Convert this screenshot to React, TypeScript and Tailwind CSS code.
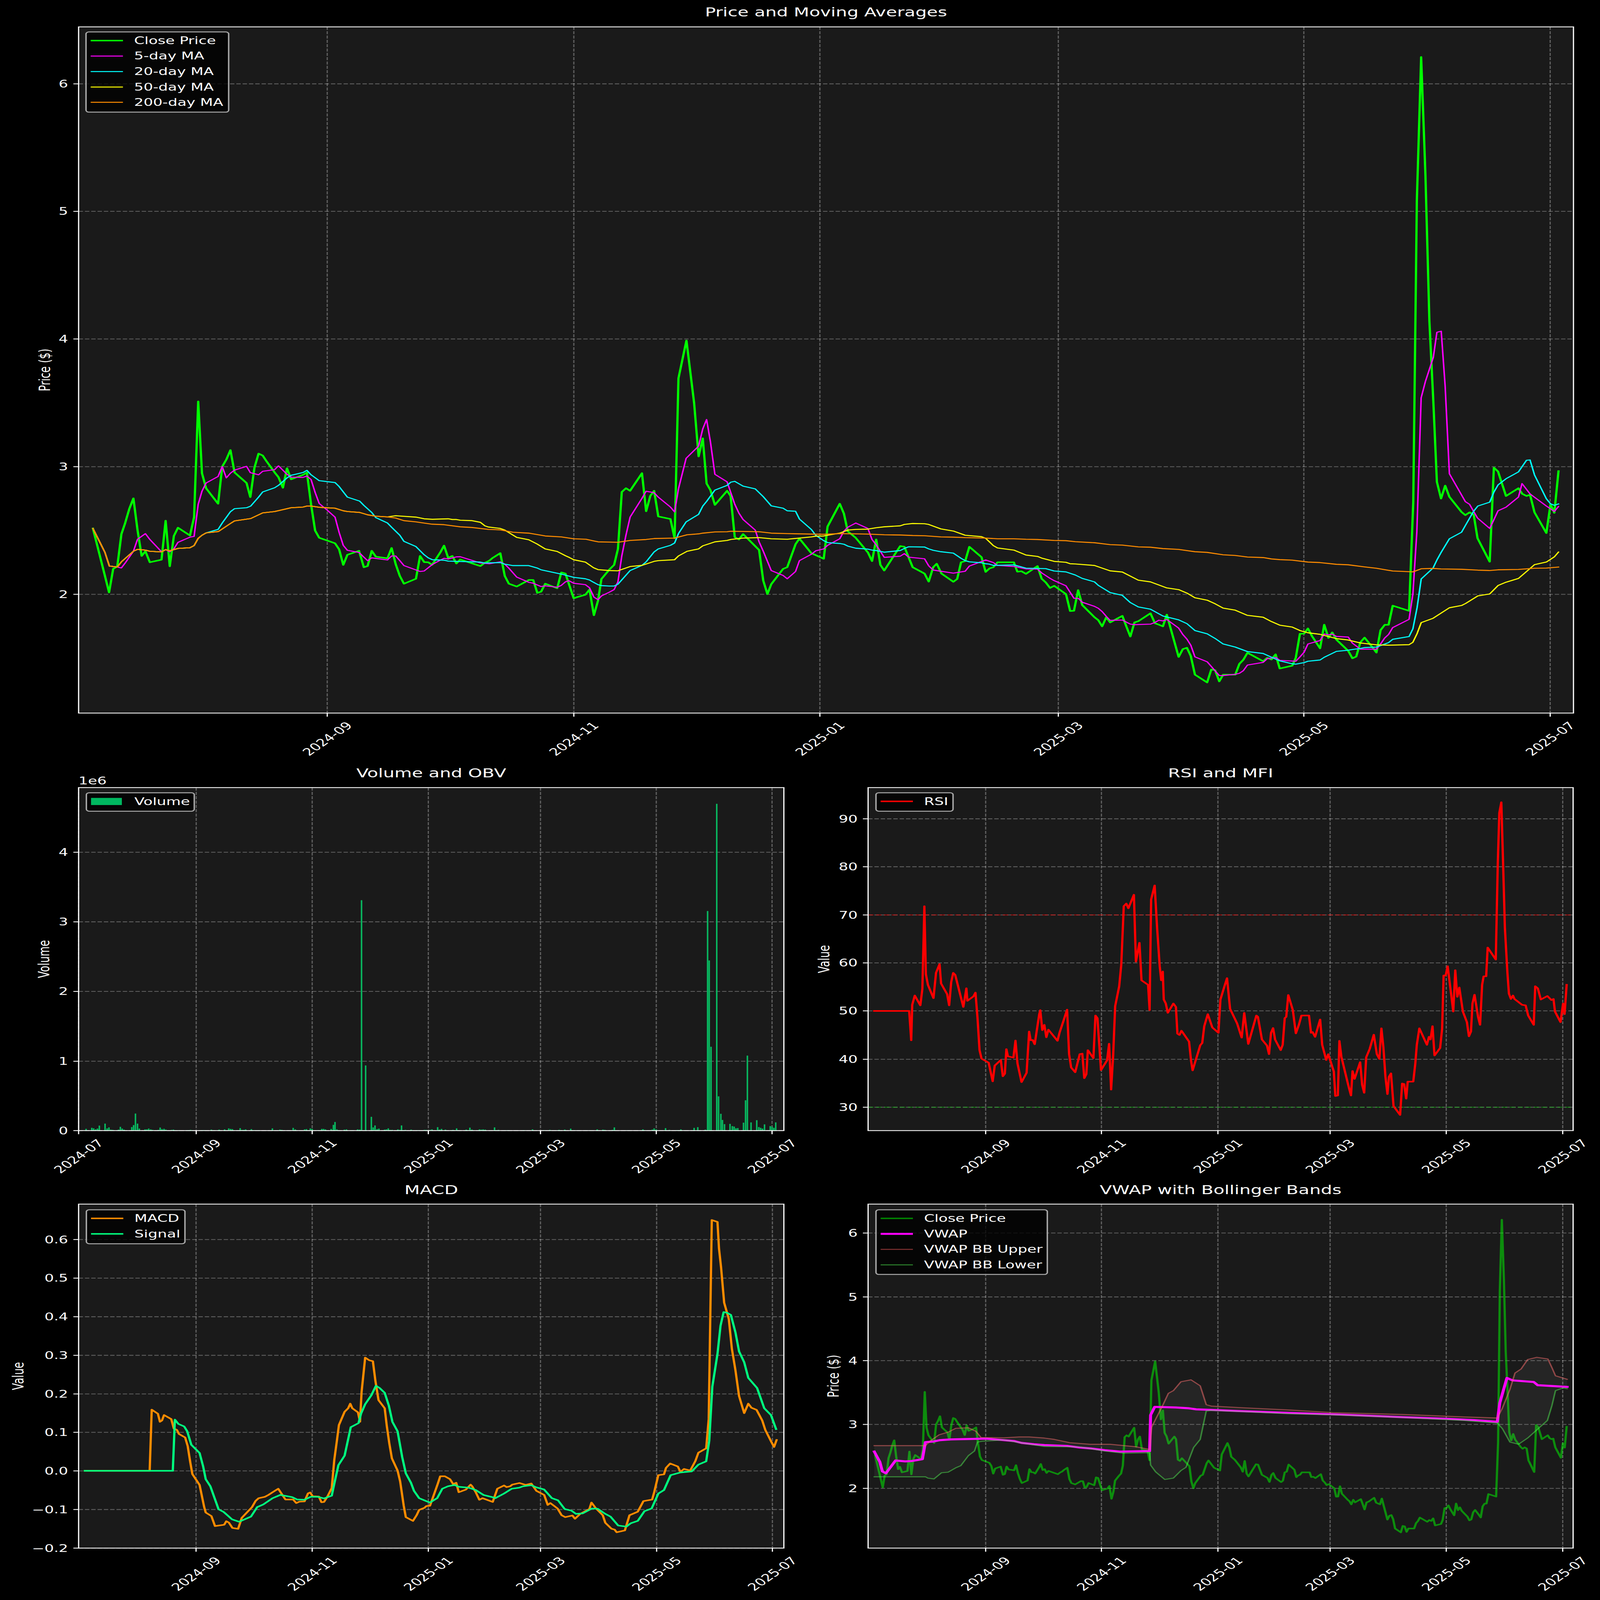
import React from "react";

type P = [number, number];

const seg = (ox: number, oy: number, sx: number, sy: number, a: number[]): P[] => {
  const out: P[] = [];
  for (let i = 0; i < a.length; i += 2) out.push([ox + a[i] / sx, oy + a[i + 1] / sy]);
  return out;
};
const z2 = (a: number[]) => seg(200, 1400, 1.0453, 1.0453, a);
const z3 = (a: number[]) => seg(1700, 1400, 1.12, 1.0453, a);
const z9 = (a: number[]) => seg(3000, 1700, 1.12, 1.4255, a);
const z6 = (a: number[]) => seg(2250, 3100, 0.7082, 0.9224, a);
const z7 = (a: number[]) => seg(0, 4780, 0.6969, 0.9079, a);
const z8 = (a: number[]) => seg(2250, 4780, 0.7082, 0.9079, a);
const pts = (a: P[]) => a.map((p) => `${p[0].toFixed(1)},${p[1].toFixed(1)}`).join(" ");

const close: P[] = [
  ...z2([62,783,97,985,109,1055,121,955,133,945,145,807,156,760,168,700,180,655,192,790,204,900,215,880,228,927,262,916,274,750,286,944,298,815,310,780,345,813,357,735,369,243,380,548,392,612,404,635,427,678,439,520,451,490,463,450,475,545,510,590,521,650,533,525,545,465,557,473,568,497,592,545,603,565,616,610,628,527,640,574,675,555,686,545,698,680,710,792,722,823,768,846,780,872,792,938,804,895,838,878,852,948,863,943,875,878,887,903,921,910,933,866,945,935,957,985,969,1018,1004,997,1016,900,1028,926,1040,927,1051,938,1075,885,1086,856,1098,908,1110,900,1122,932,1133,915,1192,943,1205,929,1218,920,1228,908,1250,888,1263,985,1275,1018,1298,1030,1322,1011,1333,1002,1346,1002,1358,1057,1369,1052,1381,1018,1416,1037,1428,970,1440,975,1464,1080,1474,1075,1498,1065,1510,1043,1523,1152,1535,1090,1545,998]),
  ...z3([0,958,15,938,27,870,39,628,52,612,65,623,102,548,115,710,128,645,140,623,153,732,191,743,204,825,216,145,241,-16,265,250,279,477,292,400,304,592,316,620,330,683,368,623,379,645,392,820,405,830,418,807,468,875,481,1005,494,1062,506,1020,543,955,556,948,582,850,594,826,631,888,670,912,682,775,720,678,733,720,745,795,770,823,808,885,821,922,834,830,847,938,859,962,884,910,909,858,922,861,935,905,948,948,985,975,998,1009,1012,948,1023,933,1038,975,1075,1010,1087,998,1099,927,1112,922,1125,861,1163,905,1176,968,1188,953,1200,948,1213,927,1264,927,1275,967,1288,965,1302,976,1338,943,1351,997,1364,1013,1377,1036,1390,1027,1427,1062,1440,1134,1452,1133]),
  ...z9([9,998,22,1085,60,1155,72,1172,84,1208,97,1155,109,1185,147,1147,160,1210,172,1267,185,1185,197,1178,235,1132,249,1190,261,1198,274,1208,286,1140,298,1220,323,1385,336,1340,349,1332,361,1380,374,1488,412,1533,425,1458,437,1462,450,1527,462,1488,500,1488,513,1425,525,1402,538,1361,587,1410,600,1390,613,1400,626,1370,639,1452,678,1436,689,1390,702,1251,715,1250,727,1220,740,1265,765,1335,778,1198,791,1275,803,1243,816,1285,853,1350,866,1393,878,1383,891,1300,904,1273,929,1330,941,1360,954,1230,967,1199,979,1199,992,1088,1043,1118]),
  [3943,2041],[3953,816],[3965,232],[3977,714],[3988,1306],[3999,1633],
  ...z9([1130,370,1143,467,1156,392,1169,457,1207,545,1219,563,1232,547,1245,560,1257,697,1295,833,1308,288,1321,310,1346,452,1385,407,1397,440,1410,452,1421,445,1435,547,1472,667,1485,500,1497,550,1510,308]),
];

const ma5: P[] = [
  ...z2([62,783,97,885,110,943,133,947,145,951,157,928,180,880,192,829,215,805,228,830,262,882,274,873,286,882,298,870,310,842,345,820,357,817,369,680,380,625,392,590,427,562,439,520,451,568,463,548,475,535,510,519,521,546,545,555,557,540,592,533,603,517,628,553,640,565,675,566,686,560,698,575,710,630,722,677,745,705,768,735,780,800,792,855,804,876,838,885,852,905,863,920,875,908,921,917,933,900,945,900,957,920,969,941,1016,966,1028,964,1040,950,1051,937,1075,918,1086,910,1098,913,1122,904,1133,903,1192,930,1218,933,1250,925,1263,935,1275,952,1298,990,1333,1012,1346,1016,1369,1030,1381,1027,1416,1033,1428,1025,1440,1010,1450,1005,1464,1016,1498,1022,1510,1035,1523,1075,1535,1086,1545,1070]),
  ...z3([0,1054,15,1043,27,1010,39,900,52,812,65,735,102,655,115,625,140,631,153,650,191,692,204,713,216,615,240,485,279,433,292,360,304,320,316,415,330,553,368,585,392,680,405,718,418,745,456,790,468,840,481,880,506,962,543,983,556,997,582,966,594,920,631,893,645,878,670,870,682,855,720,827,733,795,745,778,770,760,808,783,821,830,834,853,859,906,909,901,922,890,935,905,985,912,998,942,1012,960,1075,973,1112,965,1125,943,1176,917,1200,928,1213,940,1265,945,1302,955,1338,956,1351,972,1377,995,1390,1005,1427,1027,1452,1080]),
  ...z9([10,1046,22,1068,60,1092,72,1103,84,1122,97,1150,109,1173,147,1171,172,1195,185,1198,235,1195,249,1185,261,1172,274,1176,286,1168,323,1218,336,1255,349,1282,361,1317,374,1385,412,1413,450,1493,462,1493,500,1486,513,1480,525,1465,538,1432,587,1417,600,1395,626,1388,639,1405,689,1410,702,1385,715,1358,727,1310,765,1290,778,1252,791,1257,803,1253,816,1266,853,1270,866,1305,891,1340,941,1340,954,1310,967,1275,979,1255,992,1215,1043,1167,1055,1020]),
  [3953,2163],[3965,1618],[3977,1551],[3999,1453],[4009,1351],[4021,1347],[4032,1571],
  ...z9([1169,323,1219,485,1232,500,1257,580,1295,640,1308,590,1321,538,1346,517,1385,458,1396,380,1421,440,1472,510,1497,542,1510,513]),
];

const ma20: P[] = [
  ...z2([62,783,97,885,110,943,133,947,145,925,180,880,192,872,215,875,228,880,262,883,274,873,286,878,310,868,345,865,357,856,369,825,380,812,392,802,427,787,439,760,463,712,475,699,510,695,522,688,545,650,557,628,592,610,603,600,628,568,640,557,675,545,686,536,698,555,722,580,768,588,780,605,804,650,840,667,852,685,875,715,887,737,921,760,933,778,957,812,969,838,1004,860,1028,895,1040,908,1052,916,1086,918,1098,922,1192,926,1204,930,1250,928,1263,935,1287,941,1333,941,1357,951,1369,959,1428,977,1464,991,1498,997,1510,1002,1522,1012,1535,1022,1545,1026]),
  ...z3([0,1028,15,1028,27,1020,65,962,102,940,115,925,140,883,153,870,191,855,204,845,216,805,240,755,279,723,292,688,304,668,330,620,368,600,380,586,392,583,418,603,456,615,481,648,506,687,543,697,556,708,582,710,594,743,631,787,645,812,670,835,682,843,720,847,733,850,745,858,770,867,808,871,821,875,834,877,859,884,909,877,922,868,935,861,985,862,998,870,1012,876,1036,882,1075,888,1099,910,1112,920,1125,925,1163,929,1176,933,1188,935,1200,940,1265,938,1302,952,1364,954,1390,964,1427,968]),
  ...z9([0,910,22,930,60,950,72,970,109,1012,147,1028,172,1070,197,1095,235,1108,274,1148,323,1170,349,1192,374,1232,412,1251,437,1278,462,1310,500,1328,538,1354,587,1365,639,1408,678,1425,689,1427,715,1418,727,1410,765,1403,778,1387,816,1353,853,1346,866,1342,891,1336,904,1331,941,1328,979,1302,992,1283,1043,1267,1055,1222,1068,1100,1081,933,1118,870,1131,820,1143,780,1169,700,1207,662,1220,620,1245,540,1258,510,1295,488,1308,430,1321,388,1346,352,1385,312,1410,245,1421,243,1435,330,1472,468,1485,497,1497,506,1510,498]),
];

const ma50: P[] = [
  ...z2([62,783,97,885,110,943,133,947,145,925,180,880,192,872,215,875,228,880,262,883,274,873,286,878,310,868,345,865,357,856,369,825,380,812,392,802,428,796,463,762,475,751,522,741,557,717,592,711,628,699,640,695,675,692,686,688,698,688,722,693,768,697,792,708,804,711,840,715,863,725,887,731,921,734,945,729,1004,735,1028,742,1052,744,1098,742,1110,745,1122,745,1133,748,1168,750,1192,757,1205,772,1215,777,1250,783,1263,790,1298,821,1333,831,1357,849,1381,870,1416,881,1440,899,1452,907,1464,916,1498,926,1522,950,1535,958]),
  ...z3([0,962,27,963,65,945,102,940,140,923,153,920,204,916,216,900,243,880,279,870,292,857,330,840,368,834,380,830,418,824,468,822,506,827,556,829,594,824,631,819,645,816,670,815,720,803,745,790,770,787,808,786,834,780,859,776,909,772,922,766,948,762,985,763,998,766,1036,785,1075,794,1112,812,1163,818,1176,825,1200,856,1213,866,1264,875,1302,896,1338,902,1351,909,1390,923,1427,927,1440,933]),
  ...z9([0,846,60,855,109,886,147,893,197,940,235,950,286,985,323,995,349,1015,374,1042,412,1056,437,1077,462,1102,500,1114,538,1144,587,1155,613,1180,639,1201,678,1212,702,1232,727,1245,765,1254,816,1279,853,1287,891,1304,941,1315,979,1317,1043,1314,1055,1300,1068,1250,1081,1186,1118,1161,1169,1100,1207,1087,1220,1075,1258,1031,1295,1020,1321,971,1346,952,1385,930,1435,850,1472,835,1497,805,1510,777]),
];

const ma200: P[] = [
  ...z2([62,783,97,885,110,943,133,947,145,925,180,880,192,872,215,875,228,880,262,883,274,873,286,878,310,868,345,865,357,856,369,825,380,812,392,802,428,796,463,762,475,751,522,741,557,717,592,711,628,699,640,695,675,692,686,688,698,688,722,693,768,697,792,708,804,711,840,715,863,725,887,731,921,734,945,739,969,750,1004,755,1051,765,1086,767,1133,776,1168,779,1215,787,1250,789,1287,799,1333,803,1381,815,1428,819,1464,827,1500,829,1535,840]),
  ...z3([0,841,27,842,65,834,115,830,140,826,204,824,243,810,279,806,292,803,330,798,368,797,380,795,468,797,506,803,556,805,670,808,720,805,808,807,859,810,909,811,948,813,985,814,1036,819,1075,820,1112,822,1176,824,1213,827,1264,827,1302,829,1338,830,1390,834,1427,835]),
  ...z9([0,717,60,723,109,734,147,737,197,747,235,749,274,757,323,762,374,775,412,779,462,793,500,797,538,806,587,809,613,817,639,821,678,824,727,835,765,838,816,848,853,851,904,863,941,871,992,887,1043,891,1055,892,1081,874,1118,872,1143,875,1207,877,1258,882,1295,884,1321,880,1385,878,1435,871,1472,870,1510,864]),
];

const rsi = z6([134,933,203,933,207,1043,209,910,214,875,225,912,229,850,233,540,236,795,240,835,251,885,256,790,263,757,266,830,278,870,282,912,286,825,290,790,294,798,310,918,316,848,318,895,330,878,334,864,338,960,342,1080,346,1112,360,1127,368,1197,372,1138,384,1117,388,1178,392,1168,395,1076,398,1103,409,1108,413,1044,417,1130,425,1200,435,1165,440,1010,443,1043,447,1042,451,1058,460,945,462,930,466,1005,470,985,474,1032,478,1003,496,1045,500,1015,507,975,515,928,519,1095,523,1145,531,1163,540,1095,545,1093,549,1185,553,1170,556,1080,567,1110,571,950,575,960,582,1155,594,1118,598,1056,602,1228,606,1100,610,915,618,840,622,760,627,540,632,530,636,548,647,497,651,748,658,677,662,818,675,835,678,930,681,515,688,462,693,625,698,765,701,818,704,785,706,890,710,905,714,940,725,905,730,918,733,1018,737,1023,741,1007,756,1048,760,1120,763,1156,778,1062,782,1053,786,990,793,945,802,995,805,1000,814,1015,818,890,826,840,831,810,837,925,851,980,860,1033,865,940,873,1057,880,1010,889,950,892,955,900,1040,910,1063,914,1095,918,1015,922,997,926,1040,937,1080,941,1060,945,960,948,955,952,873,961,930,967,1017,973,985,978,950,993,950,997,1015,1000,1012,1005,1030,1015,965,1019,1060,1027,1117,1031,1095,1042,1160,1045,1252,1050,1250,1053,1045,1057,1105,1071,1215,1076,1250,1079,1158,1083,1188,1094,1125,1098,1210,1102,1240,1106,1107,1113,1075,1121,1022,1127,1095,1132,1113,1136,998,1140,1070,1144,1180,1148,1245,1151,1180,1155,1167,1160,1290,1173,1323,1177,1205,1181,1207,1185,1262,1188,1198,1199,1198,1203,1130,1206,1060,1211,998,1226,1060,1230,1030,1233,1040,1237,990,1241,1100,1252,1072,1256,1000,1259,800,1263,800,1267,765,1278,935,1282,780,1286,880,1290,845,1297,935,1305,975,1309,1028,1313,1010,1316,905,1320,872,1327,955,1331,985,1335,835,1338,803,1343,803,1346,695,1362,740,1366,380,1369,190,1373,150,1376,350,1380,620,1385,790,1388,868,1392,888,1396,875,1399,888,1414,910,1421,912,1426,950,1437,985,1440,840,1445,848,1451,890,1464,877,1472,892,1476,888,1479,935,1490,975,1495,905,1498,945,1502,835]);

const macd = z7([165,1091,291,1091,295,865,307,880,311,910,315,905,319,885,333,900,338,935,344,940,348,955,360,968,365,1000,370,1060,374,1103,388,1143,397,1225,400,1245,411,1258,418,1295,436,1290,440,1277,445,1282,452,1302,463,1305,470,1265,490,1225,497,1202,503,1192,515,1187,522,1180,530,1170,541,1157,555,1197,570,1197,576,1210,582,1205,592,1204,599,1174,603,1171,608,1185,620,1186,625,1207,630,1206,637,1185,645,1155,650,1050,655,980,659,922,670,873,677,860,681,843,685,860,696,875,700,910,703,800,710,673,718,683,725,686,730,760,736,830,748,860,752,925,757,990,762,1045,773,1090,778,1130,785,1220,789,1262,803,1276,810,1255,815,1235,825,1228,829,1221,836,1220,851,1140,856,1111,865,1111,875,1122,881,1140,887,1135,892,1170,906,1160,915,1142,918,1148,925,1170,932,1198,938,1192,958,1206,967,1157,980,1145,985,1151,992,1148,996,1142,1010,1136,1022,1143,1033,1138,1043,1165,1058,1180,1065,1217,1070,1210,1084,1230,1092,1255,1099,1262,1113,1256,1118,1268,1128,1250,1140,1238,1146,1232,1150,1208,1158,1228,1172,1255,1177,1283,1189,1305,1195,1308,1199,1318,1215,1311,1224,1255,1240,1242,1251,1203,1268,1197,1272,1170,1280,1107,1291,1104,1295,1080,1303,1064,1318,1075,1323,1095,1330,1084,1342,1090,1352,1055,1358,1024,1373,1008,1378,900,1384,165,1395,172,1398,270,1402,340,1408,470,1417,530,1423,640,1430,720,1437,815,1447,878,1455,843,1461,858,1471,866,1482,905,1488,940,1500,985,1505,1003,1510,977]);

const signal = z7([165,1091,336,1091,340,902,347,918,358,927,364,945,372,995,388,1025,395,1075,400,1122,409,1148,425,1233,435,1243,451,1270,465,1279,488,1260,500,1225,512,1215,530,1192,545,1180,568,1188,578,1197,592,1198,604,1187,618,1187,630,1193,645,1183,651,1130,658,1070,670,1035,682,930,697,915,702,880,710,845,722,812,731,777,738,785,748,803,756,850,763,910,773,945,782,1040,789,1100,799,1135,805,1165,815,1192,829,1203,836,1208,850,1192,860,1157,871,1148,884,1143,892,1150,911,1153,925,1162,940,1180,957,1188,963,1192,980,1175,995,1157,1010,1153,1017,1148,1033,1144,1043,1152,1058,1160,1073,1192,1085,1200,1098,1232,1111,1238,1120,1250,1133,1248,1151,1230,1162,1231,1177,1250,1187,1260,1202,1293,1218,1297,1226,1285,1240,1276,1253,1240,1267,1230,1280,1175,1291,1162,1304,1107,1323,1097,1345,1093,1358,1068,1373,1056,1379,980,1385,780,1395,660,1401,555,1407,505,1413,507,1421,515,1430,580,1437,650,1447,690,1455,748,1472,785,1486,860,1499,885,1509,937]);

const vwap = z8([134,1020,145,1058,150,1093,157,1100,176,1053,195,1056,207,1055,229,1048,235,985,250,983,263,978,285,975,354,972,385,977,410,981,425,988,450,993,470,996,515,999,540,1005,565,1009,590,1015,620,1020,678,1018,680,885,688,855,730,857,755,860,770,864,800,866,850,870,950,877,1050,883,1180,893,1265,899,1320,904,1365,910,1370,840,1384,748,1395,757,1437,763,1445,775,1503,781]);
const bbUpper = z8([134,998,235,998,245,980,262,958,280,948,295,934,320,932,335,945,345,968,390,969,420,966,440,966,470,970,490,975,520,987,560,993,600,993,650,1002,678,1012,682,930,690,900,705,845,715,805,725,795,740,762,760,755,778,777,790,847,800,852,860,858,950,866,1040,876,1180,883,1300,892,1365,896,1375,860,1390,790,1400,730,1412,715,1425,680,1443,672,1465,678,1473,710,1480,740,1503,753]);
const bbLower = z8([134,1113,235,1113,240,1118,252,1121,267,1098,280,1096,295,1080,305,1072,320,1035,332,1018,338,985,347,982,390,977,425,988,470,1001,540,1003,590,1018,627,1026,678,1024,680,1070,690,1095,708,1123,725,1118,740,1090,750,1078,765,1005,778,975,790,870,800,868,860,872,950,880,1040,884,1180,894,1300,905,1365,915,1375,935,1390,985,1407,993,1425,970,1464,905,1473,850,1480,795,1495,785,1503,788]);
const closeSmall: P[] = close.map((p) => [2750 + (p[0] - 913) * 0.47186, 6053 - (2417.3 - p[1]) * 0.5]);

const volA = [63,22,88,34,96,28,105,15,113,25,121,61,146,85,155,27,163,39,171,12,179,9,205,12,213,46,221,25,229,12,238,3,263,43,271,67,279,208,288,85,296,25,321,15,329,15,337,25,346,15,354,9,379,9,387,37,395,18,404,22,412,12,437,9,445,12,453,6,462,3,470,6,503,3,511,6,520,9,528,6,561,3,570,6,578,6,586,3,611,12,620,6,628,3,636,3,645,12,669,15,678,3,687,27,695,21,703,18,727,3,737,30,745,9,753,9,761,15,786,18,794,6,802,6,811,3,820,6,878,27,911,12,919,9,961,3,969,33,978,15,986,3,994,3,1019,15,1027,18,1035,3,1044,27,1052,21,1077,6,1085,3,1094,21,1102,21,1110,15,1135,21,1145,70,1152,105,1160,15,1168,6,1193,12,1202,15,1210,3,1218,3,1227,6,1251,15,1260,12,1268,2811,1286,795,1311,168,1319,39,1327,63,1336,18,1344,24,1369,12,1377,15,1385,27,1393,9,1402,9,1427,15,1435,9,1443,63,1452,6,1460,9,1485,12,1493,6,1510,6,1518,6,1543,9,1551,9];
const volB = [0,9,8,15,33,42,41,12,50,21,67,12,91,6,100,9,108,3,116,27,125,6,158,12,166,6,174,36,183,12,208,3,216,15,224,12,232,15,241,12,266,3,282,39,291,6,299,9,324,3,332,3,341,6,408,6,416,3,448,15,498,6,507,3,524,9,532,3,557,3,564,9,573,3,589,12,615,24,632,3,647,3,681,3,698,3,706,3,731,15,739,3,756,12,764,9,789,3,798,9,806,39,814,3,856,3,864,3,873,3,923,3,931,15,939,6,972,12,980,27,989,15,1022,3,1030,30,1047,9,1080,6,1088,6,1097,15,1105,3,1113,3,1146,3,1155,33,1171,42,1204,12,1214,2679,1221,2076,1229,1023,1254,3987,1262,418,1272,205,1279,130,1288,79,1312,82,1322,55,1330,49,1338,28,1346,31,1371,97,1380,370,1388,915,1404,100,1429,127,1438,43,1446,34,1454,25,1463,76,1488,55,1496,49,1504,34,1512,100];
const bars: { x: number; h: number }[] = [];
for (let i = 0; i < volA.length; i += 2) bars.push({ x: 200 + volA[i] / 1.568, h: volA[i + 1] / 3 });
for (let i = 0; i < volB.length; i += 2) bars.push({ x: 1200 + volB[i] / 1.568, h: volB[i + 1] / 3 });

const DATES = ["2024-09", "2024-11", "2025-01", "2025-03", "2025-05", "2025-07"];

type Ax = {
  l: number; t: number; r: number; b: number;
  vx: number; vy: number; vw: number; vh: number;
  xt: [number, string][];
  yt: [number, string][];
  yLabel: string; yLabelX: number;
};

function Plot({ ax, title, legend, children, extra, className }: {
  ax: Ax; title: string; legend?: React.ReactNode; children: React.ReactNode; extra?: React.ReactNode; className: string;
}) {
  const cy = (ax.t + ax.b) / 2;
  const lab = ax.b + 104;
  return (
    <section className={`flex flex-col ${className}`}>
      <h2 className="flex h-[104px] shrink-0 items-center justify-center pb-[4px] text-[50px] font-normal leading-none" style={{ paddingLeft: ax.l - ax.vx, paddingRight: ax.vx + ax.vw - ax.r }}>
        {title}
      </h2>
      <div className="relative" style={{ width: ax.vw, height: ax.vh }}>
        <svg width={ax.vw} height={ax.vh} viewBox={`${ax.vx} ${ax.vy} ${ax.vw} ${ax.vh}`} className="block overflow-visible">
          <rect x={ax.l} y={ax.t} width={ax.r - ax.l} height={ax.b - ax.t} fill="#1a1a1a" />
          <g stroke="#fff" strokeOpacity={0.3} strokeWidth={3.33} strokeDasharray="12.3 5.3" fill="none">
            {ax.xt.map(([x, s]) => (
              <line key={s} x1={x} x2={x} y1={ax.t} y2={ax.b} />
            ))}
            {ax.yt.map(([y, s]) => (
              <line key={s} x1={ax.l} x2={ax.r} y1={y} y2={y} />
            ))}
          </g>
          {children}
          <rect x={ax.l} y={ax.t} width={ax.r - ax.l} height={ax.b - ax.t} fill="none" stroke="#fff" strokeWidth={3.33} />
          <g stroke="#fff" strokeWidth={3.33}>
            {ax.xt.map(([x, s]) => (
              <line key={s} x1={x} x2={x} y1={ax.b} y2={ax.b + 14.6} />
            ))}
            {ax.yt.map(([y, s]) => (
              <line key={s} x1={ax.l - 14.6} x2={ax.l} y1={y} y2={y} />
            ))}
          </g>
          <g fill="#fff" className="text-[41.67px]">
            {ax.xt.map(([x, s]) => (
              <text key={s} x={x} y={lab} dy="0.36em" textAnchor="middle" transform={`rotate(-45 ${x} ${lab})`}>
                {s}
              </text>
            ))}
            {ax.yt.map(([y, s]) => (
              <text key={s} x={ax.l - 29.2} y={y} dy="0.36em" textAnchor="end">
                {s}
              </text>
            ))}
            <text x={ax.yLabelX} y={cy} dy="0.36em" textAnchor="middle" transform={`rotate(-90 ${ax.yLabelX} ${cy})`}>
              {ax.yLabel}
            </text>
            {extra}
          </g>
        </svg>
        {legend}
      </div>
    </section>
  );
}

function Legend({ className, items }: { className: string; items: { label: string; line: string }[] }) {
  return (
    <div className={`absolute flex flex-col rounded-[10px] border-4 border-[#a8a8a8] bg-black/80 pl-[11px] pt-[2px] pb-[6px] text-[41.67px] ${className}`}>
      {items.map((it) => (
        <div key={it.label} className="flex h-[62.75px] items-center leading-none">
          <span className={`mr-[31px] w-[90px] shrink-0 ${it.line}`} />
          <span className="whitespace-nowrap">{it.label}</span>
        </div>
      ))}
    </div>
  );
}

const Line = ({ p, c, w, o }: { p: P[]; c: string; w: number; o?: number }) => (
  <polyline points={pts(p)} fill="none" stroke={c} strokeWidth={w} strokeOpacity={o} strokeLinejoin="round" strokeLinecap="square" />
);

const main: Ax = {
  l: 219.3, t: 109.3, r: 4390, b: 2900, vx: 0, vy: 104, vw: 4464, vh: 2990,
  xt: [913, 1601, 2287.5, 2952.7, 3637.7, 4325].map((x, i) => [x, DATES[i]] as [number, string]),
  yt: [[341, "6"], [859.5, "5"], [1378.5, "4"], [1898, "3"], [2417, "2"]],
  yLabel: "Price ($)", yLabelX: 124,
};
const volAx: Ax = {
  l: 219.3, t: 3203, r: 2187, b: 4598, vx: 0, vy: 3198, vw: 2250, vh: 1591,
  xt: [219.3, 547.4, 871, 1195, 1508, 1831, 2154].map((x, i) => [x, ["2024-07", ...DATES][i]] as [number, string]),
  yt: [[4598, "0"], [4316, "1"], [4032, "2"], [3749, "3"], [3466, "4"]],
  yLabel: "Volume", yLabelX: 122,
};
const rsiAx: Ax = {
  l: 2422, t: 3203, r: 4389, b: 4598, vx: 2250, vy: 3198, vw: 2214, vh: 1591,
  xt: [2750, 3073, 3398, 3711, 4035, 4360].map((x, i) => [x, DATES[i]] as [number, string]),
  yt: [[3330, "90"], [3525, "80"], [3721, "70"], [3916, "60"], [4111, "50"], [4308, "40"], [4503, "30"]],
  yLabel: "Value", yLabelX: 2299,
};
const macdAx: Ax = {
  l: 219.3, t: 4897, r: 2187, b: 6296, vx: 0, vy: 4893, vw: 2250, vh: 1614,
  xt: [547, 871, 1195, 1508, 1832, 2155].map((x, i) => [x, DATES[i]] as [number, string]),
  yt: [[5041, "0.6"], [5198, "0.5"], [5355, "0.4"], [5512, "0.3"], [5669, "0.2"], [5825, "0.1"], [5982, "0.0"], [6139, "\u22120.1"], [6296, "\u22120.2"]],
  yLabel: "Value", yLabelX: 50,
};
const vwapAx: Ax = {
  l: 2422, t: 4897, r: 4389, b: 6296, vx: 2250, vy: 4893, vw: 2214, vh: 1614,
  xt: [2750, 3073, 3398, 3711, 4035, 4360].map((x, i) => [x, DATES[i]] as [number, string]),
  yt: [[5014.6, "6"], [5274.5, "5"], [5533.5, "4"], [5793, "3"], [6053, "2"]],
  yLabel: "Price ($)", yLabelX: 2325,
};

export default function App() {
  // Identity at 4464x6507; fits the whole figure into whatever window the page really gets.
  const fit = `scale(${window.innerWidth / 4464}, ${window.innerHeight / 6507})`;
  return (
    <div className="h-screen w-screen overflow-hidden bg-black">
      <div className="flex h-[6507px] w-[4464px] origin-top-left flex-col overflow-hidden bg-black text-white [font-family:'DejaVu_Sans',sans-serif]" style={{ transform: fit }}>
        <Plot
          ax={main}
          title="Price and Moving Averages"
          className="h-[3094px] w-[4464px] shrink-0"
          legend={
            <Legend
              className="left-[238px] top-[24px] w-[402px]"
              items={[
                { label: "Close Price", line: "h-[6px] bg-[#00ff00]" },
                { label: "5-day MA", line: "h-[4px] bg-[#ff00ff]" },
                { label: "20-day MA", line: "h-[4px] bg-[#00ffff]" },
                { label: "50-day MA", line: "h-[4px] bg-[#ffff00]" },
                { label: "200-day MA", line: "h-[4px] bg-[#ff8c00]" },
              ]}
            />
          }
        >
          <Line p={close} c="#00ff00" w={6.25} />
          <Line p={ma5} c="#ff00ff" w={4.17} />
          <Line p={ma20} c="#00ffff" w={4.17} />
          <Line p={ma50} c="#ffff00" w={4.17} />
          <Line p={ma200} c="#ff8c00" w={4.17} />
        </Plot>

        <div className="grid h-[1695px] shrink-0 grid-cols-[2250px_2214px]">
          <Plot
            ax={volAx}
            title="Volume and OBV"
            className="h-[1695px]"
            extra={<text x={219} y={3190}>1e6</text>}
            legend={
              <Legend
                className="left-[239px] top-[24px] w-[305px]"
                items={[{ label: "Volume", line: "h-[29px] !w-[86px] !mr-[35px] bg-[#00b860]" }]}
              />
            }
          >
            <g fill="#08b960">
              {bars.map((b, i) => (
                <rect key={i} x={b.x - 2.1} y={4598 - b.h} width={4.2} height={b.h} />
              ))}
            </g>
          </Plot>

          <Plot
            ax={rsiAx}
            title="RSI and MFI"
            className="h-[1695px]"
            legend={
              <Legend
                className="left-[192px] top-[24px] w-[219px]"
                items={[{ label: "RSI", line: "h-[6px] bg-[#ff0000]" }]}
              />
            }
          >
            <line x1={2422} x2={4389} y1={3721} y2={3721} stroke="#ff0000" strokeOpacity={0.5} strokeWidth={4.17} strokeDasharray="15.4 6.7" />
            <line x1={2422} x2={4389} y1={4503} y2={4503} stroke="#00ff00" strokeOpacity={0.35} strokeWidth={4.17} strokeDasharray="15.4 6.7" />
            <Line p={rsi} c="#ff0000" w={6.25} />
          </Plot>
        </div>

        <div className="grid h-[1718px] shrink-0 grid-cols-[2250px_2214px]">
          <Plot
            ax={macdAx}
            title="MACD"
            className="h-[1718px]"
            legend={
              <Legend
                className="left-[239px] top-[25px] w-[279px]"
                items={[
                  { label: "MACD", line: "h-[6px] bg-[#ff8c00]" },
                  { label: "Signal", line: "h-[6px] bg-[#00ff7f]" },
                ]}
              />
            }
          >
            <Line p={macd} c="#ff8c00" w={6.25} />
            <Line p={signal} c="#00ff7f" w={6.25} />
          </Plot>

          <Plot
            ax={vwapAx}
            title="VWAP with Bollinger Bands"
            className="h-[1718px]"
            legend={
              <Legend
                className="left-[192px] top-[25px] w-[482px]"
                items={[
                  { label: "Close Price", line: "h-[6px] bg-[#008200]" },
                  { label: "VWAP", line: "h-[8px] bg-[#ff00ff]" },
                  { label: "VWAP BB Upper", line: "h-[4px] bg-[#823232]" },
                  { label: "VWAP BB Lower", line: "h-[4px] bg-[#2d822d]" },
                ]}
              />
            }
          >
            <Line p={closeSmall} c="#00ff00" w={6.25} o={0.5} />
            <Line p={vwap} c="#ff00ff" w={8.3} />
            <Line p={bbUpper} c="#ff6b6b" w={4.17} o={0.5} />
            <Line p={bbLower} c="#51ff51" w={4.17} o={0.45} />
            <polygon points={pts([...bbUpper, ...[...bbLower].reverse()])} fill="#ffffff" fillOpacity={0.05} />
          </Plot>
        </div>
      </div>
    </div>
  );
}
